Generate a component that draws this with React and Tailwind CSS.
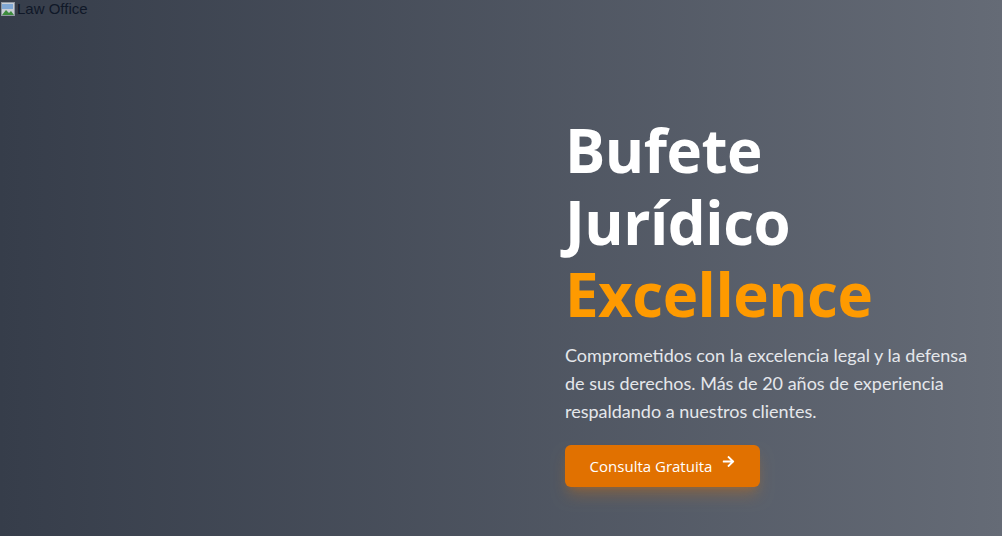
import React from 'react';
import { FaArrowRight } from 'react-icons/fa';

function BrokenImage() {
    return (
        <div className="absolute top-0 left-0 flex items-center text-[15px] leading-[18px] text-gray-900" style={{ fontFamily: '"Liberation Sans", Arial, sans-serif' }}>
            <svg width="16" height="16" viewBox="0 0 16 16" className="mr-px">
                <rect x="1.5" y="1.5" width="13" height="13" fill="#c9ced6" stroke="#8f96a0" />
                <path d="M2 14 L6 9 L9 12 L11 10 L14 14 Z" fill="#3d8b3d" />
                <rect x="2" y="3" width="11" height="5" fill="#7fa7d4" />
            </svg>
            <span>Law Office</span>
        </div>
    );
}

export default function App() {
    return (
        <section
            className="relative w-full h-[536px] overflow-hidden bg-gradient-to-r from-[#363d4a] to-[#656b76]"
            style={{ fontFamily: '"Open Sans", "Noto Sans", sans-serif' }}
        >
            <BrokenImage />

            <div className="flex h-full">
                <div className="w-[565px] shrink-0" />
                <div className="flex-1 pt-[114px] pr-4">
                    {/* Heading */}
                    <h1 className="text-[60px] leading-[72px] font-bold text-white tracking-[-0.5px]">
                        Bufete
                        <br />
                        Jurídico
                        <br />
                        <span className="text-amber-500">Excellence</span>
                    </h1>

                    <p className="mt-[11px] text-lg leading-7 text-gray-200" style={{ fontFamily: 'Lato, "Open Sans", sans-serif' }}>
                        Comprometidos con la excelencia legal y la defensa de sus derechos. Más de 20 años de experiencia respaldando a nuestros clientes.
                    </p>

                    <button className="mt-[20px] flex items-center gap-[10px] h-[42px] w-[195px] justify-center rounded-md bg-amber-600 text-white text-[15px] shadow-lg shadow-amber-600/30">
                        Consulta Gratuita
                        <FaArrowRight className="w-[13px] h-[13px] -mt-2.5" />
                    </button>
                </div>
            </div>
        </section>
    );
}
